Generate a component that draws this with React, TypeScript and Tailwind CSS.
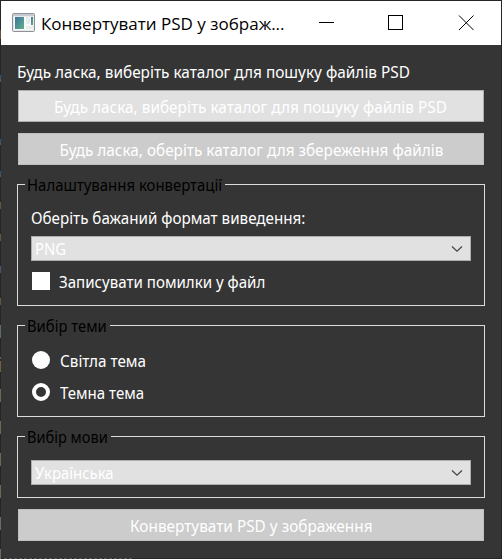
import type { ReactNode } from 'react';

function Group({ title, className, titleWidth, children }: { title: ReactNode; className: string; titleWidth: string; children: ReactNode }) {
  return (
    <section className={`relative -mx-px flex flex-col border border-[#dcdcdc] px-[13px] ${className}`}>
      <h2 className={`absolute -top-[11px] left-[7px] h-[22px] whitespace-nowrap bg-[#353535] pl-[2px] leading-[22px] text-black ${titleWidth}`}>
        {title}
      </h2>
      {children}
    </section>
  );
}

function Select({ children }: { children: ReactNode }) {
  return (
    <button className="flex h-[25px] w-full shrink-0 items-center justify-between border border-[#adadad] bg-[#e1e1e1] pl-[3px] pr-[7px] text-left">
      <span className="inline-block origin-left scale-x-[0.93] pt-px leading-[23px]">{children}</span>
      <svg width="12" height="8" viewBox="0 0 12 8" fill="none">
        <path d="M1 1.500 6 6.200 11 1.500" stroke="#444" strokeWidth="1.2" />
      </svg>
    </button>
  );
}

function WindowIcon() {
  return (
    <svg width="23" height="20" viewBox="0 0 23 20">
      <defs>
        <linearGradient id="pane" x1="0" y1="0" x2="1" y2="1">
          <stop offset="0" stopColor="#3f74a0" />
          <stop offset="1" stopColor="#5fb287" />
        </linearGradient>
      </defs>
      <rect x="0.5" y="0.5" width="22" height="18" rx="1" fill="#e6e8ea" stroke="#8c9298" />
      <path d="M1 2h21" stroke="#c4cacf" strokeWidth="2" />
      <rect x="2" y="4" width="19" height="13" fill="#fafafa" />
      <rect x="3" y="4" width="9" height="12" fill="url(#pane)" />
      <rect x="14" y="4" width="4" height="7" fill="#e9eced" />
      <rect x="14" y="13" width="7" height="3" fill="#e9eced" />
      <rect x="19" y="4" width="2" height="8" fill="url(#pane)" />
    </svg>
  );
}

// Slivers of the window behind that show past the left border: [top, height, colour].
const slivers: [number, number, string][] = [
  [30, 9, '#6b5040'],
  [75, 4, '#2f5575'],
  [79, 3, '#6b5438'],
  [139, 4, '#2f5575'],
  [143, 2, '#6b5438'],
  [171, 4, '#2f5575'],
  [175, 2, '#6b5438'],
  [202, 7, '#665440'],
  [234, 7, '#665440'],
  [266, 7, '#46586a'],
  [298, 7, '#665440'],
  [325, 13, '#5d6b6b'],
  [357, 2, '#6f6040'],
  [361, 11, '#6f6040'],
  [389, 13, '#6b6b4c'],
  [421, 13, '#6b6b4c'],
  [453, 13, '#6b6b4c'],
  [485, 13, '#6b6b4c'],
  [517, 13, '#6a6a62'],
  [549, 10, '#6a6a5c'],
];

export default function App() {
  return (
    <div className="relative h-[559px] w-[502px] overflow-hidden bg-[#262626] p-px font-['Noto_Sans',sans-serif] text-[16px] text-white">
      {slivers.map(([top, height, backgroundColor]) => (
        <i key={top} className="absolute left-0 w-px" style={{ top, height, backgroundColor }} />
      ))}
      <i className="absolute bottom-0 left-[4px] w-[128px] border-b border-dashed border-[#5a5558]" />
      <div className="flex h-[557px] w-[500px] flex-col bg-[#353535]">
        <header className="flex h-[44px] shrink-0 items-center bg-white pl-[11px] text-black">
          <WindowIcon />
          <h1 className="ml-[6px] w-[277px] whitespace-nowrap pt-[1px] font-['Open_Sans',sans-serif] text-[17px]">
            Конвертувати PSD у зображ...
          </h1>
          <svg width="156" height="16" viewBox="0 0 156 16" fill="none" stroke="#000">
            <path d="M1 7.500h15" />
            <rect x="70.5" y="0.5" width="14" height="14" />
            <path d="m141 .5 14.500 14.500m0-14.500L141 15" />
          </svg>
        </header>
        <main className="flex flex-col px-[17px] pt-[16px]">
          <p className="-ml-px h-[22px] origin-left scale-x-[0.961] whitespace-nowrap leading-[22px]">
            Будь ласка, виберіть каталог для пошуку файлів PSD
          </p>
          <button className="mt-[7px] h-8 whitespace-nowrap border border-[#adadad] bg-[#e1e1e1] pr-px pt-px">
            <span className="inline-block scale-x-[0.961]">Будь ласка, виберіть каталог для пошуку файлів PSD</span>
          </button>
          <button className="mt-[11px] h-8 whitespace-nowrap border border-[#bfbfbf] bg-[#cccccc] pt-px">
            <span className="inline-block scale-x-[0.958]">Будь ласка, оберіть каталог для збереження файлів</span>
          </button>
          <Group
            title={<span className="inline-block origin-left scale-x-[0.933]">Налаштування конвертації</span>}
            titleWidth="w-[200px]"
            className="mt-[19px] h-[122px] pt-[22px]"
          >
            <p className="mb-[7px] h-[22px] origin-left scale-x-[0.948] whitespace-nowrap leading-[22px]">
              Оберіть бажаний формат виведення:
            </p>
            <Select>PNG</Select>
            <label className="mt-[10px] flex h-[20px] items-center pl-px">
              <i className="mr-[9px] size-[18px] bg-white" />
              <span className="inline-block origin-left scale-x-[0.943] pt-[2px]">Записувати помилки у файл</span>
            </label>
          </Group>
          <Group
            title={<span className="inline-block origin-left scale-x-[0.925]">Вибір теми</span>}
            titleWidth="w-[85px]"
            className="mt-[19px] h-[92px] gap-[14px] pt-[25px]"
          >
            <label className="flex h-[18px] items-center pl-px">
              <i className="mr-[10px] size-[18px] rounded-full bg-white" />
              <span className="inline-block origin-left scale-x-[0.955] pt-[2px]">Світла тема</span>
            </label>
            <label className="flex h-[18px] items-center pl-px">
              <i className="mr-[10px] size-[18px] rounded-full border-4 border-white" />
              <span className="inline-block origin-left scale-x-[0.94] pt-[2px]">Темна тема</span>
            </label>
          </Group>
          <Group
            title={<span className="inline-block origin-left scale-x-[0.91]">Вибір мови</span>}
            titleWidth="w-[86px]"
            className="mt-[19px] h-[62px] pt-[23px]"
          >
            <Select>Українська</Select>
          </Group>
          <button className="mt-[11px] h-8 whitespace-nowrap border border-[#bfbfbf] bg-[#cccccc] pt-px">
            <span className="inline-block scale-x-[0.96]">Конвертувати PSD у зображення</span>
          </button>
        </main>
      </div>
    </div>
  );
}
